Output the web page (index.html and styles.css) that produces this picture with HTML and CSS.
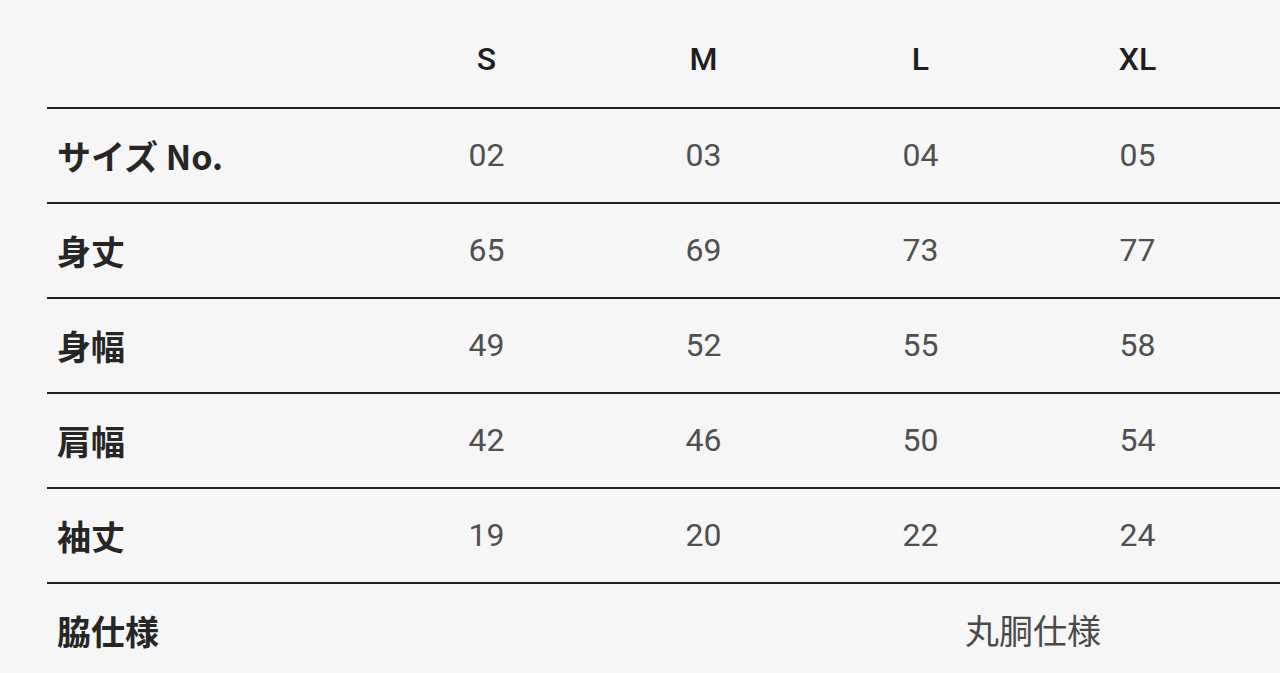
FILE: index.html
```html
<!DOCTYPE html>
<html lang="ja">
<head>
<meta charset="utf-8">
<title>サイズ表</title>
<link rel="stylesheet" href="styles.css">
</head>
<body>
<table class="size-table">
  <colgroup>
    <col class="c-label">
    <col class="c-size">
    <col class="c-size">
    <col class="c-size">
    <col class="c-size">
    <col class="c-rest">
  </colgroup>
  <thead>
    <tr class="row head">
      <th></th><th>S</th><th>M</th><th>L</th><th>XL</th><th></th>
    </tr>
  </thead>
  <tbody>
    <tr class="row"><th>サイズ No.</th><td>02</td><td>03</td><td>04</td><td>05</td><td></td></tr>
    <tr class="row"><th>身丈</th><td>65</td><td>69</td><td>73</td><td>77</td><td></td></tr>
    <tr class="row"><th>身幅</th><td>49</td><td>52</td><td>55</td><td>58</td><td></td></tr>
    <tr class="row"><th>肩幅</th><td>42</td><td>46</td><td>50</td><td>54</td><td></td></tr>
    <tr class="row"><th>袖丈</th><td>19</td><td>20</td><td>22</td><td>24</td><td></td></tr>
    <tr class="row last"><th>脇仕様</th><td></td><td></td><td colspan="2">丸胴仕様</td><td></td></tr>
  </tbody>
</table>
</body>
</html>
```
FILE: styles.css
```css
html, body {
  margin: 0;
  padding: 0;
  background: #f6f6f6;
  overflow: hidden;
  height: 673px;
}
.size-table {
  margin: 13px 0 0 47px;
  border-collapse: collapse;
  table-layout: fixed;
  width: 1300px;
  font-family: Roboto, "Noto Sans CJK JP", sans-serif;
}
.c-label { width: 331px; }
.c-size { width: 217px; }
.c-rest { width: 101px; }
.row { height: 95px; }
.row th, .row td {
  padding: 0;
  vertical-align: middle;
  text-align: center;
  font-size: 32px;
  line-height: 1;
}
.size-table thead th {
  font-weight: 500;
  color: #1e1e1e;
  font-size: 32px;
  padding-bottom: 2px;
}
.size-table tbody th {
  text-align: left;
  padding-left: 10px;
  font-family: "Noto Sans CJK JP", sans-serif;
  font-weight: 700;
  color: #262626;
  font-size: 34px;
}
.size-table td {
  color: #505050;
  font-weight: 400;
  padding-bottom: 2px;
}
.size-table td[colspan] {
  font-family: "Noto Sans CJK JP", sans-serif;
  font-size: 34px;
  padding-left: 8px;
  color: #4a4a4a;
}
.head, .size-table tbody .row:not(.last) {
  border-bottom: 2px solid #1f1f1f;
}
```
